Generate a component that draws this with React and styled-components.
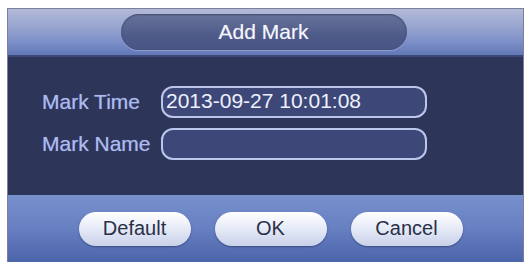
import React, { useState } from 'react';
import styled, { createGlobalStyle } from 'styled-components';

const GlobalStyle = createGlobalStyle`
  html, body {
    margin: 0;
    padding: 0;
    background: #ffffff;
  }
  body {
    font-family: "Liberation Sans", Arial, sans-serif;
  }
`;

const Page = styled.div`
  width: 526px;
  height: 262px;
  padding: 8px 2px 0 7px;
  box-sizing: border-box;
  overflow: hidden;
`;

const Dialog = styled.div`
  height: 100%;
  display: flex;
  flex-direction: column;
  border: 1px solid #7b809a;
  border-bottom: none;
  box-sizing: border-box;
  background: #2d3558;
`;

const Header = styled.div`
  height: 46px;
  display: flex;
  align-items: center;
  justify-content: center;
  padding-right: 4px;
  background: linear-gradient(
    to bottom,
    #b3bad8 0%,
    #9ba7d0 35%,
    #7d90c8 70%,
    #6277b6 100%
  );
  border-bottom: 2px solid #3b4878;
`;

const TitlePill = styled.div`
  width: 286px;
  height: 36px;
  border-radius: 18px;
  display: flex;
  align-items: center;
  justify-content: center;
  background: linear-gradient(to bottom, #69739b 0%, #4e5a88 60%, #485485 100%);
  box-shadow: inset 0 1px 2px rgba(40, 45, 80, 0.6), 0 1px 1px rgba(200, 210, 240, 0.4);
  color: #f4f6fc;
  font-size: 21px;
  text-shadow: 0 0 1px rgba(255, 255, 255, 0.4);
`;

const Body = styled.div`
  flex: 1;
  display: flex;
  flex-direction: column;
  gap: 10px;
  padding: 29px 0 0 34px;
`;

const Row = styled.div`
  display: flex;
  align-items: center;
`;

const Label = styled.label`
  width: 119px;
  color: #acbbf0;
  font-size: 21px;
  text-shadow: 0 0 1px rgba(172, 187, 240, 0.6);
`;

const Field = styled.input`
  width: 266px;
  height: 32px;
  box-sizing: border-box;
  border: 2px solid #bcc6ea;
  border-radius: 12px;
  background: #3d4878;
  color: #eef1fb;
  font-family: "Liberation Sans", Arial, sans-serif;
  font-size: 21px;
  padding: 0 0 2px 3px;
  outline: none;
`;

const Footer = styled.div`
  height: 67px;
  display: flex;
  align-items: center;
  justify-content: center;
  gap: 24px;
  padding: 0 0 0 10px;
  background: linear-gradient(to bottom, #7890cc 0%, #6680c2 50%, #4c64aa 100%);
`;

const Button = styled.button`
  width: 112px;
  height: 34px;
  border: none;
  border-radius: 17px;
  background: linear-gradient(to bottom, #ffffff 0%, #e8ecf8 45%, #c9d1ea 100%);
  box-shadow: 0 1px 2px rgba(30, 40, 80, 0.5);
  color: #2a3048;
  font-family: "Liberation Sans", Arial, sans-serif;
  font-size: 20px;
  padding: 0;
  cursor: pointer;
`;

const App = () => {
  const [markTime, setMarkTime] = useState('2013-09-27 10:01:08');
  const [markName, setMarkName] = useState('');

  return (
    <Page>
      <GlobalStyle />
      <Dialog>
        <Header>
          <TitlePill>Add Mark</TitlePill>
        </Header>
        <Body>
          <Row>
            <Label>Mark Time</Label>
            <Field value={markTime} onChange={(e) => setMarkTime(e.target.value)} />
          </Row>
          <Row>
            <Label>Mark Name</Label>
            <Field value={markName} onChange={(e) => setMarkName(e.target.value)} />
          </Row>
        </Body>
        <Footer>
          <Button>Default</Button>
          <Button>OK</Button>
          <Button>Cancel</Button>
        </Footer>
      </Dialog>
    </Page>
  );
};

export default App;
